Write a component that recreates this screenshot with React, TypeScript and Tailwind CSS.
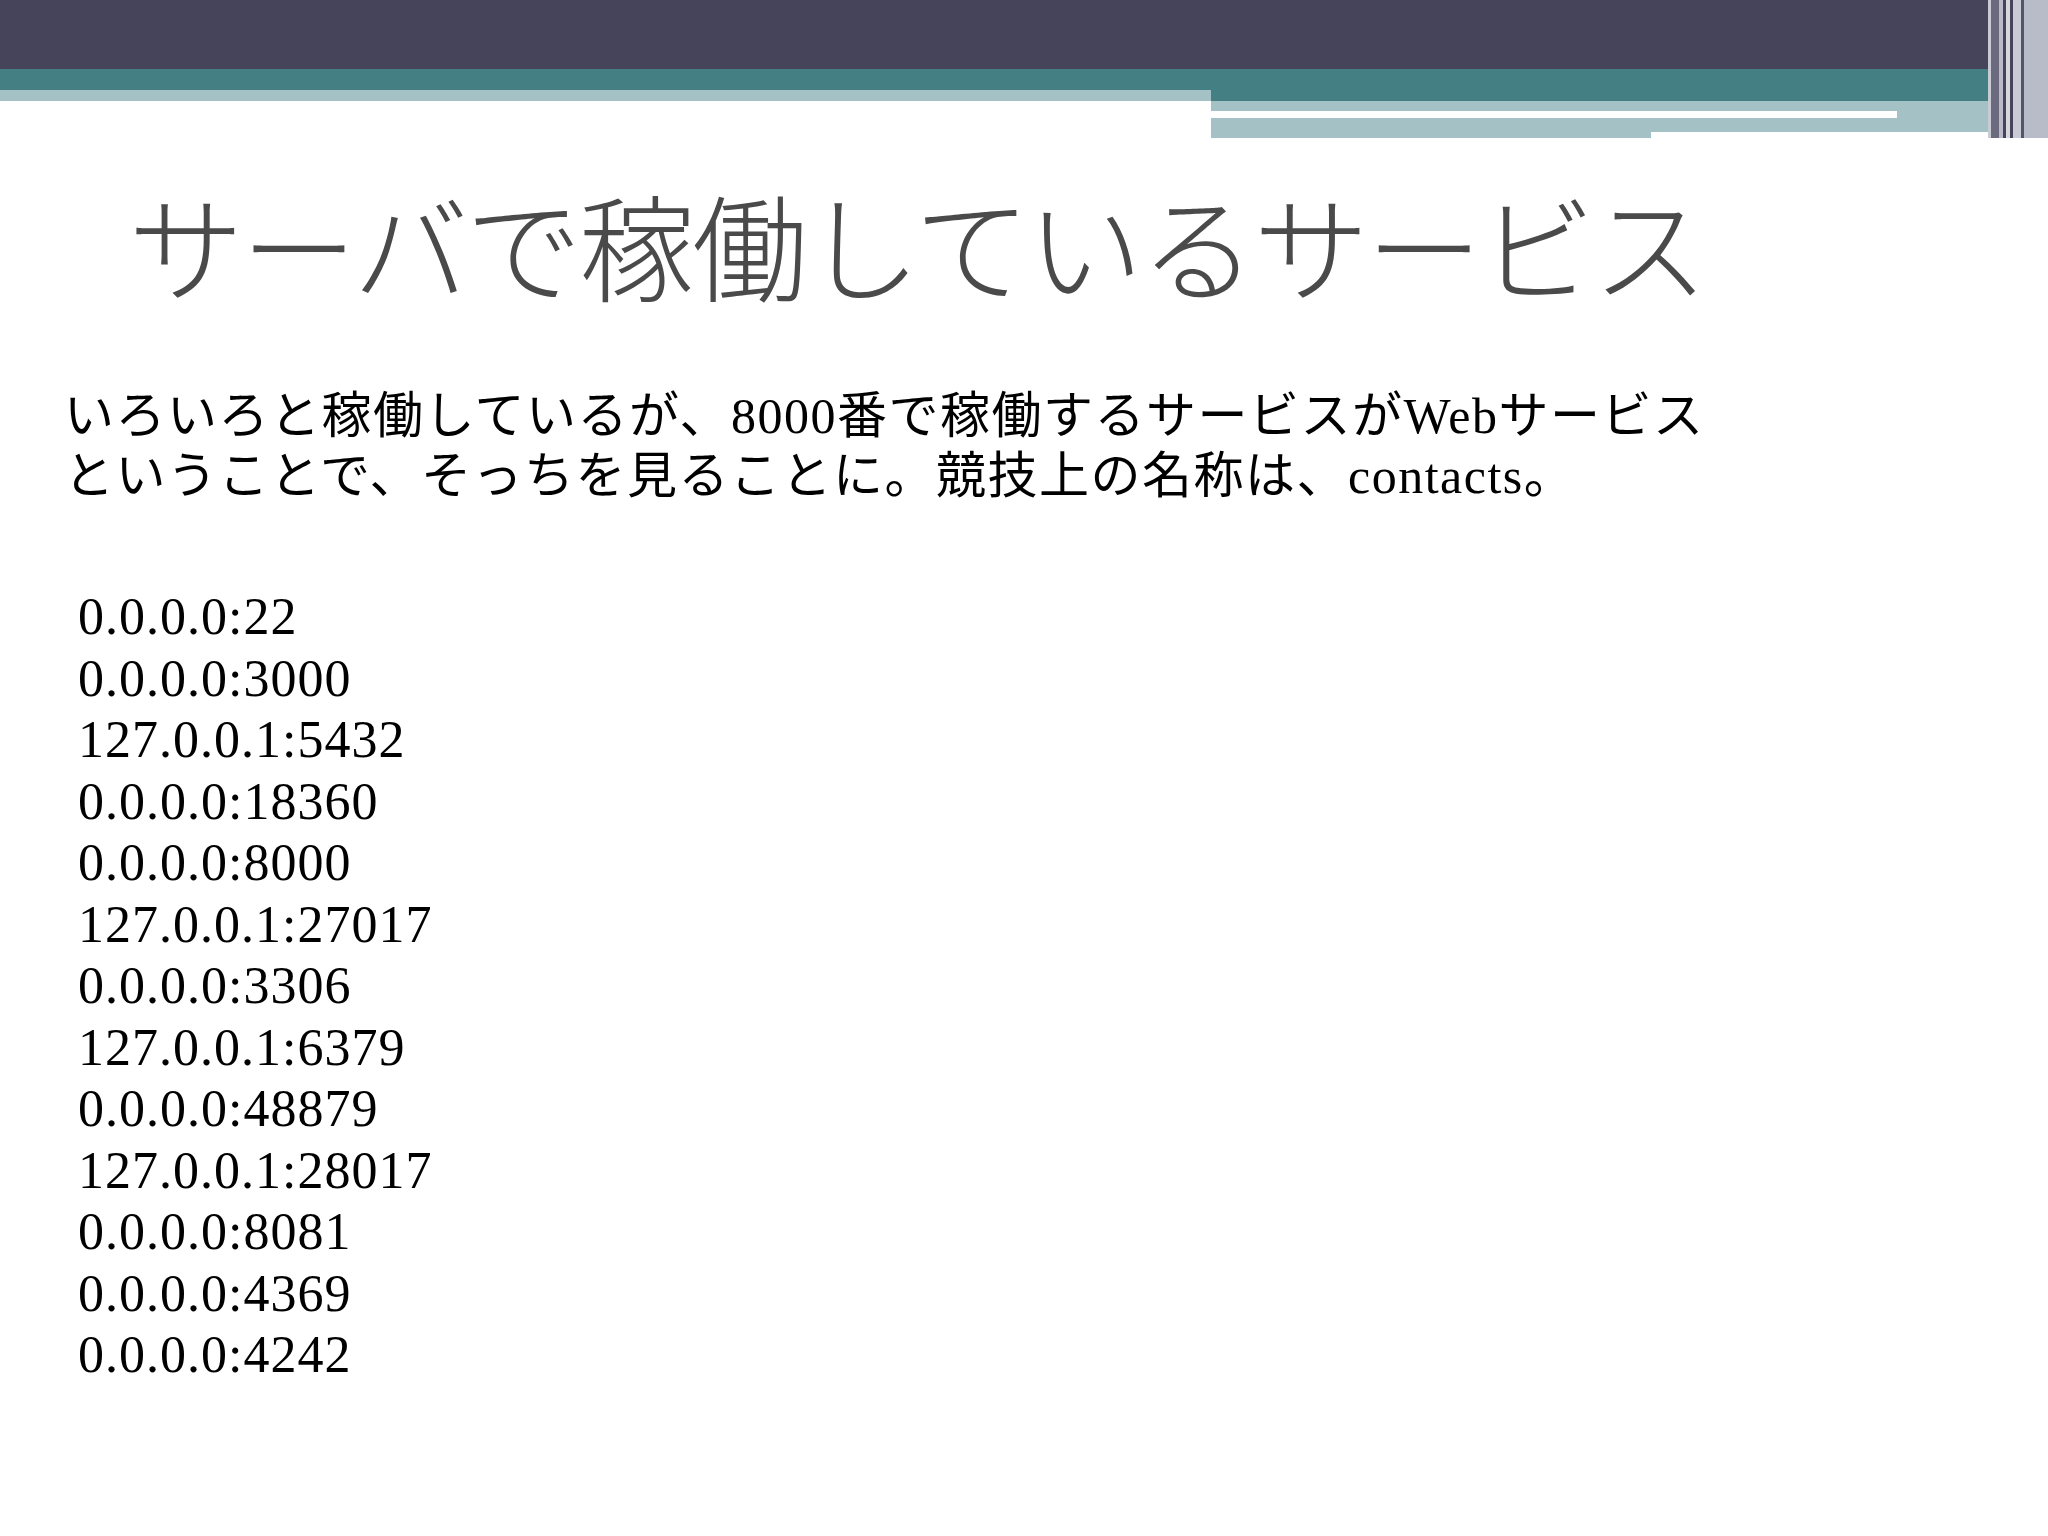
export default function App() {
  const items = ["0.0.0.0:22","0.0.0.0:3000","127.0.0.1:5432","0.0.0.0:18360","0.0.0.0:8000","127.0.0.1:27017","0.0.0.0:3306","127.0.0.1:6379","0.0.0.0:48879","127.0.0.1:28017","0.0.0.0:8081","0.0.0.0:4369","0.0.0.0:4242"];
  const serif = { fontFamily: '"Liberation Serif", "Noto Sans CJK JP", serif' };
  return (
    <div className="w-[2048px] h-[1536px] bg-white relative overflow-hidden" style={serif}>
      <div className="relative h-[140px]">
        <div className="absolute left-0 top-0 w-full h-[69px] bg-[#46445a]" />
        <div className="absolute left-0 top-[69px] w-full h-[32px] bg-[#447f84]" />
        <div className="absolute left-0 top-[90px] w-[1211px] h-[11px] bg-[#a4c1c5]" />
        <div className="absolute left-[1211px] top-[101px] w-[837px] h-[37px] bg-[#a4c1c5]" />
        <div className="absolute left-[1211px] top-[111px] w-[686px] h-[7px] bg-white" />
        <div className="absolute left-[1651px] top-[132px] w-[359px] h-[8px] bg-white" />
        <div className="absolute left-[1988px] top-0 w-[60px] h-[138px] flex">
          <div className="w-[3px] bg-[#c8cbd4]" />
          <div className="w-[8px] bg-[#6b6a7e]" />
          <div className="w-[4px] bg-[#b9bcc8]" />
          <div className="w-[3px] bg-[#46445a]" />
          <div className="w-[4px] bg-[#d6d8de]" />
          <div className="w-[3px] bg-[#46445a]" />
          <div className="w-[8px] bg-[#c9ccd4]" />
          <div className="w-[3px] bg-[#55546a]" />
          <div className="flex-1 bg-[#b8bbc8]" />
        </div>
      </div>
      <div className="pl-[128px] pt-[44px] text-[116px] leading-[140px] text-[#4a4a4a] font-light tracking-[-3px]">
        サーバで稼働しているサービス
      </div>
      <div className="pl-[64px] pt-[62px] text-[50px] leading-[60px] text-black tracking-[1.5px]">
        <div>いろいろと稼働しているが、8000番で稼働するサービスがWebサービス</div>
        <div>ということで、そっちを見ることに。競技上の名称は、contacts。</div>
      </div>
      <div className="pl-[78px] pt-[80px] text-[52px] leading-[61.5px] text-black tracking-[1px]">
        {items.map((t) => <div key={t}>{t}</div>)}
      </div>
    </div>
  );
}
